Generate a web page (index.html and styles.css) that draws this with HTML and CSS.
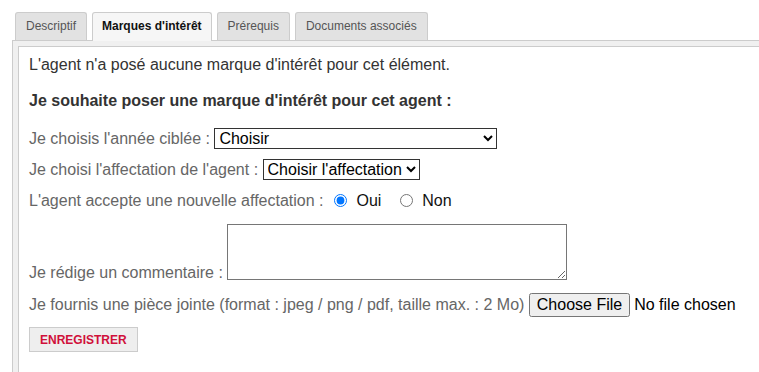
FILE: index.html
```html
<!DOCTYPE html>
<html lang="fr">
<head>
  <meta charset="UTF-8" />
  <title>Marques d'intérêt</title>
  <link rel="stylesheet" href="styles.css">
</head>
<body>

  <div class="tabs">
    <ul class="tab-nav">
      <li class="tab">Descriptif</li>
      <li class="tab active">Marques d'intérêt</li>
      <li class="tab">Prérequis</li>
      <li class="tab">Documents associés</li>
    </ul>

    <div class="tab-frame">
      <div class="tab-panel">
        <p class="notice">L'agent n'a posé aucune marque d'intérêt pour cet élément.</p>
        <p class="lead">Je souhaite poser une marque d'intérêt pour cet agent :</p>

        <!-- Formulaire de marque d'intérêt -->
        <form class="interest-form" onsubmit="return false;">
          <div class="row">
            <label for="annee">Je choisis l'année ciblée :</label>
            <select id="annee" class="select-year">
              <option>Choisir</option>
            </select>
          </div>

          <div class="row">
            <label for="affectation">Je choisi l'affectation de l'agent :</label>
            <select id="affectation">
              <option>Choisir l'affectation</option>
            </select>
          </div>

          <div class="row row-radio">
            <span class="label">L'agent accepte une nouvelle affectation :</span>
            <label class="choice"><input type="radio" name="accepte" checked> Oui</label>
            <label class="choice"><input type="radio" name="accepte"> Non</label>
          </div>

          <div class="row row-comment">
            <label for="commentaire">Je rédige un commentaire :</label>
            <textarea id="commentaire"></textarea>
          </div>

          <div class="row">
            <label for="piece">Je fournis une pièce jointe (format : jpeg / png / pdf, taille max. : 2 Mo)</label>
            <input type="file" id="piece">
          </div>

          <button type="submit" class="btn-save">ENREGISTRER</button>
        </form>
      </div>
    </div>
  </div>

</body>
</html>
```

FILE: styles.css
```css
html, body {
  margin: 0;
  overflow: hidden;
}

body {
  background: #fff;
  color: #333;
  font-family: "Liberation Sans", Arial, sans-serif;
  font-size: 16px;
  padding: 12px 0 0 12px;
  height: 360px;
}

.tab-nav {
  list-style: none;
  margin: 0 0 0 3px;
  padding: 0;
  display: flex;
  gap: 5px;
  position: relative;
  z-index: 1;
}

.tab {
  font-size: 12px;
  line-height: 15px;
  color: #555;
  background: #e2e2e2;
  border: 1px solid #ccc;
  border-bottom: none;
  border-radius: 3px 3px 0 0;
  padding: 6px 10px 6px;
}

.tab.active {
  background: #f6f6f6;
  color: #111;
  font-weight: bold;
  padding: 6px 9px 7px;
  margin-bottom: -1px;
}

.tab-frame {
  background: #f0f0f0;
  border: 1px solid #ccc;
  padding: 5px 0 0 5px;
  width: 900px;
  height: 400px;
}

.tab-panel {
  background: #fff;
  border: 1px solid #ccc;
  padding: 9px 10px 10px;
  height: 400px;
}

.notice {
  margin: 0 0 18px;
}

.lead {
  font-weight: bold;
  margin: 0 0 18px;
}

.row {
  color: #666;
  margin-bottom: 10px;
}

.row select,
.row input,
.row textarea {
  font-family: inherit;
  font-size: 16px;
  color: #000;
}

.row select {
  height: 21px;
  padding: 0;
  border: 1px solid #333;
  border-radius: 0;
  background: #fff;
}

.select-year {
  width: 283px;
}

.row-radio {
  margin-top: 12px;
}

.choice {
  color: #111;
  margin-left: 6px;
}

.choice + .choice {
  margin-left: 14px;
}

.choice input {
  margin: 0 5px 0 0;
  vertical-align: -1px;
}

.row-comment {
  margin-top: 14px;
  margin-bottom: 11px;
}

.row-comment textarea {
  width: 340px;
  height: 56px;
  box-sizing: border-box;
  border: 1px solid #767676;
  margin: 0;
  vertical-align: -2px;
  resize: vertical;
}

.btn-save {
  margin: 0;
  background: #eee;
  border: 1px solid #ccc;
  color: #d0103a;
  font-family: inherit;
  font-size: 12px;
  font-weight: bold;
  padding: 0 10px;
  height: 25px;
}
```
